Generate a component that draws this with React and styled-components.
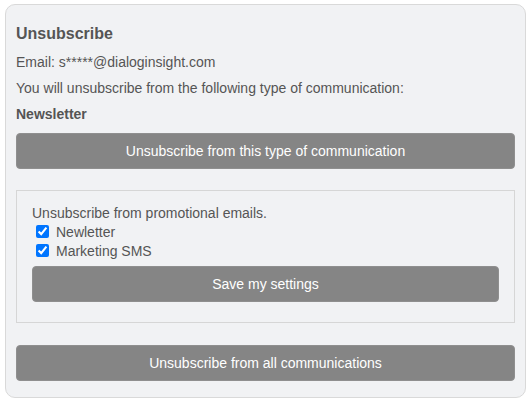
import React from "react";
import styled, { createGlobalStyle } from "styled-components";

const Global = createGlobalStyle`
  html, body { margin: 0; padding: 0; background: #ffffff; }
  body { font-family: "Liberation Sans", Arial, sans-serif; color: #555555; }
  * { box-sizing: border-box; }
`;

const Page = styled.div`
  padding: 4px 6px 0 5px;
`;

const Card = styled.div`
  width: 521px;
  height: 394px;
  background: #f1f2f4;
  border: 1px solid #d9d9d9;
  border-radius: 10px;
  padding: 20px 10px 16px 10px;
  display: flex;
  flex-direction: column;
`;

const Title = styled.h3`
  margin: 0;
  font-size: 16px;
  line-height: 18px;
  font-weight: bold;
  color: #555555;
`;

const Line = styled.p`
  margin: ${(p) => p.$top || 0}px 0 0 0;
  font-size: 14px;
  line-height: 16px;
  font-weight: ${(p) => (p.$bold ? "bold" : "normal")};
`;

const Button = styled.button`
  display: block;
  width: 100%;
  height: 36px;
  margin-top: ${(p) => p.$top || 0}px;
  border: 1px solid #8f8f8f;
  border-radius: 4px;
  background: #858585;
  color: #ffffff;
  font-family: "Liberation Sans", Arial, sans-serif;
  font-size: 14px;
  cursor: pointer;
`;

const Box = styled.div`
  margin-top: 21px;
  border: 1px solid #d6d6d6;
  padding: 14px 15px 20px 15px;
`;

const BoxText = styled.div`
  font-size: 14px;
  line-height: 17px;
`;

const CheckRow = styled.label`
  display: flex;
  align-items: center;
  height: 19px;
  font-size: 14px;
  line-height: 16px;
  color: #555555;

  input {
    width: 13px;
    height: 13px;
    margin: 3px 7px 3px 4px;
  }
`;

export default function App() {
  return (
    <>
      <Global />
      <Page>
        <Card>
          <Title>Unsubscribe</Title>
          <Line $top={11}>Email: s*****@dialoginsight.com</Line>
          <Line $top={10}>You will unsubscribe from the following type of communication:</Line>
          <Line $top={10} $bold>Newsletter</Line>
          <Button $top={11}>Unsubscribe from this type of communication</Button>
          <Box>
            <BoxText>Unsubscribe from promotional emails.</BoxText>
            <CheckRow>
              <input type="checkbox" defaultChecked />
              Newletter
            </CheckRow>
            <CheckRow>
              <input type="checkbox" defaultChecked />
              Marketing SMS
            </CheckRow>
            <Button $top={6}>Save my settings</Button>
          </Box>
          <Button $top={22}>Unsubscribe from all communications</Button>
        </Card>
      </Page>
    </>
  );
}
